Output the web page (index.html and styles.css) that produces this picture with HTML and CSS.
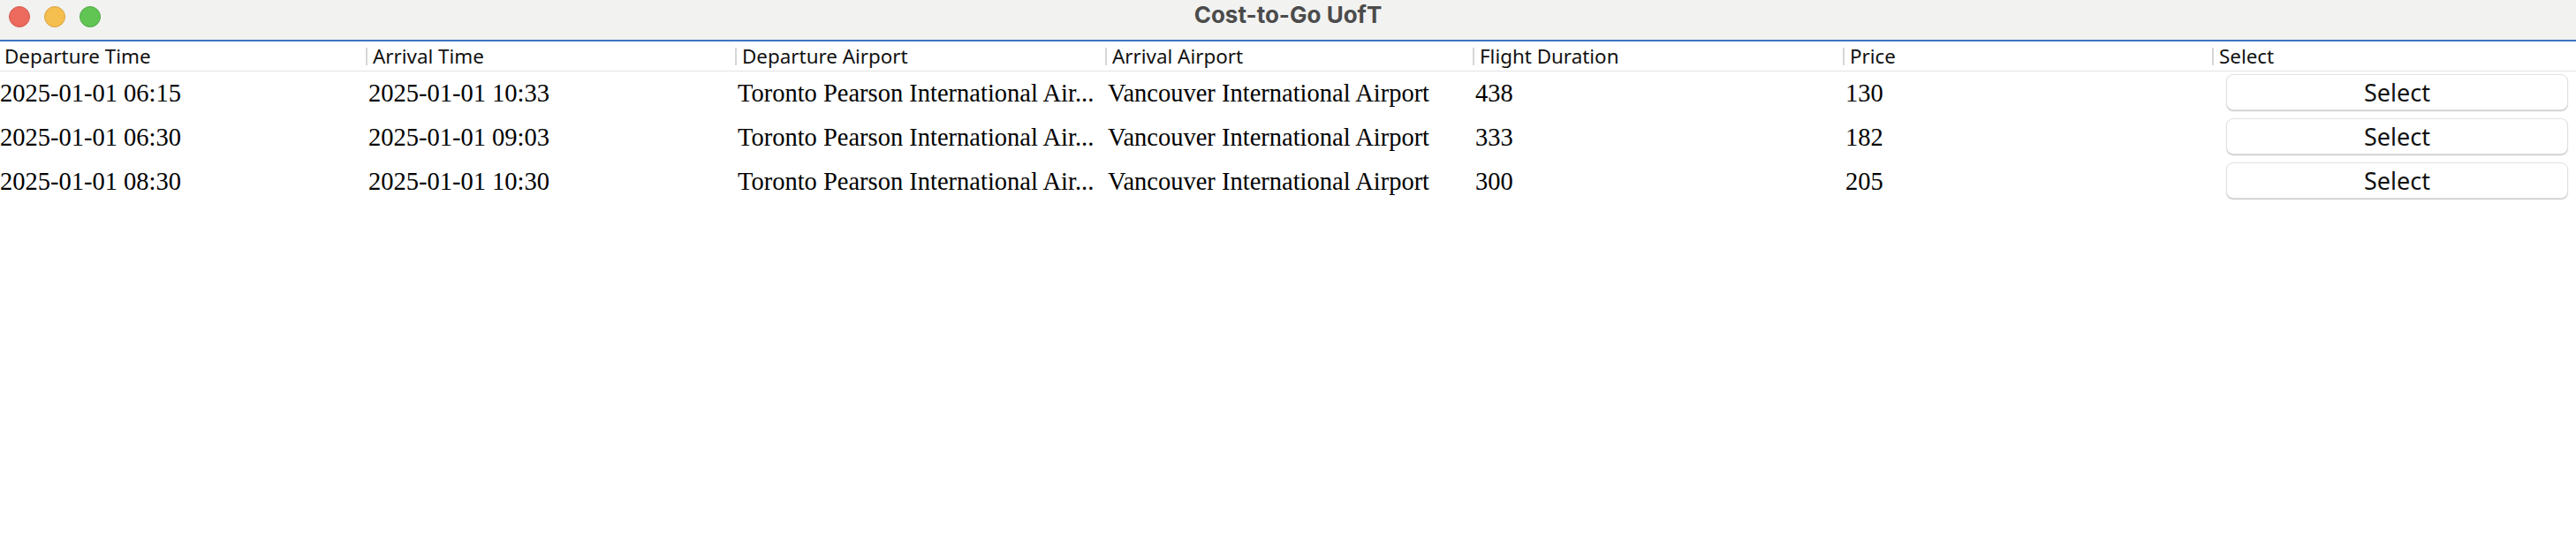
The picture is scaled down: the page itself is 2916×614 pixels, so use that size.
FILE: index.html
```html
<!DOCTYPE html>
<html>
<head>
<meta charset="utf-8">
<title>Cost-to-Go UofT</title>
<link rel="stylesheet" href="styles.css">
</head>
<body>
<div class="window">
  <header class="titlebar">
    <div class="lights">
      <span class="light red"></span>
      <span class="light yellow"></span>
      <span class="light green"></span>
    </div>
    <div class="title">Cost-to-Go UofT</div>
    <div></div>
  </header>
  <div class="table">
    <div class="row head">
      <div class="hcell first">Departure Time</div>
      <div class="hcell"><span class="sep"></span>Arrival Time</div>
      <div class="hcell"><span class="sep"></span>Departure Airport</div>
      <div class="hcell"><span class="sep"></span>Arrival Airport</div>
      <div class="hcell"><span class="sep"></span>Flight Duration</div>
      <div class="hcell"><span class="sep"></span>Price</div>
      <div class="hcell"><span class="sep"></span>Select</div>
    </div>
    <div class="row">
      <div class="cell first">2025-01-01 06:15</div>
      <div class="cell">2025-01-01 10:33</div>
      <div class="cell">Toronto Pearson International Air...</div>
      <div class="cell">Vancouver International Airport</div>
      <div class="cell">438</div>
      <div class="cell">130</div>
      <div class="bcell"><button class="btn">Select</button></div>
    </div>
    <div class="row">
      <div class="cell first">2025-01-01 06:30</div>
      <div class="cell">2025-01-01 09:03</div>
      <div class="cell">Toronto Pearson International Air...</div>
      <div class="cell">Vancouver International Airport</div>
      <div class="cell">333</div>
      <div class="cell">182</div>
      <div class="bcell"><button class="btn">Select</button></div>
    </div>
    <div class="row">
      <div class="cell first">2025-01-01 08:30</div>
      <div class="cell">2025-01-01 10:30</div>
      <div class="cell">Toronto Pearson International Air...</div>
      <div class="cell">Vancouver International Airport</div>
      <div class="cell">300</div>
      <div class="cell">205</div>
      <div class="bcell"><button class="btn">Select</button></div>
    </div>
  </div>
</div>
</body>
</html>
```
FILE: styles.css
```css
html, body {
  margin: 0;
  padding: 0;
  background: #ffffff;
}

.window {
  width: 2916px;
  height: 614px;
  background: #ffffff;
}

.titlebar {
  height: 45px;
  background: #f2f2f1;
  border-bottom: 2px solid #3b76c0;
  display: grid;
  grid-template-columns: 1fr auto 1fr;
  align-items: start;
}

.lights {
  display: flex;
  gap: 16px;
  padding: 7px 0 0 10px;
}

.light {
  width: 24px;
  height: 24px;
  border-radius: 50%;
  box-sizing: border-box;
}

.red { background: #ec6a5e; border: 1px solid #d45a4e; }
.yellow { background: #f4bf4f; border: 1px solid #d9a53f; }
.green { background: #61c554; border: 1px solid #50aa44; }

.title {
  font-family: Inter, "Liberation Sans", sans-serif;
  font-weight: 700;
  font-size: 26px;
  line-height: 32px;
  padding-top: 1px;
  color: #4b4b4b;
}

.row {
  display: grid;
  grid-template-columns: 414px 418px 419px 416px 419px 418px 1fr;
}

.head {
  height: 33px;
  border-bottom: 1px solid #e2e2e2;
}

.hcell {
  display: flex;
  align-items: center;
  gap: 6px;
  font-family: "Noto Sans", sans-serif;
  font-size: 22.4px;
  line-height: 33px;
  color: #111111;
  white-space: nowrap;
  overflow: hidden;
}

.hcell.first {
  padding-left: 5px;
}

.sep {
  width: 2px;
  height: 20px;
  background: #d6d6d6;
  flex: none;
}

.cell {
  font-family: "Liberation Serif", "Times New Roman", serif;
  font-size: 28.5px;
  line-height: 50px;
  height: 50px;
  color: #000000;
  padding-left: 3px;
  white-space: nowrap;
  overflow: hidden;
}

.cell.first {
  padding-left: 0;
}

.bcell {
  padding: 3px 9px 0 16px;
  height: 50px;
  box-sizing: border-box;
}

.btn {
  display: block;
  width: 100%;
  height: 41px;
  margin: 0;
  padding: 0;
  background: #ffffff;
  border: 1px solid #e1e1e1;
  border-radius: 8px;
  box-shadow: 0 1px 1px rgba(0, 0, 0, 0.22);
  font-family: "Noto Sans", sans-serif;
  font-size: 27px;
  line-height: 39px;
  color: #111111;
}
```
